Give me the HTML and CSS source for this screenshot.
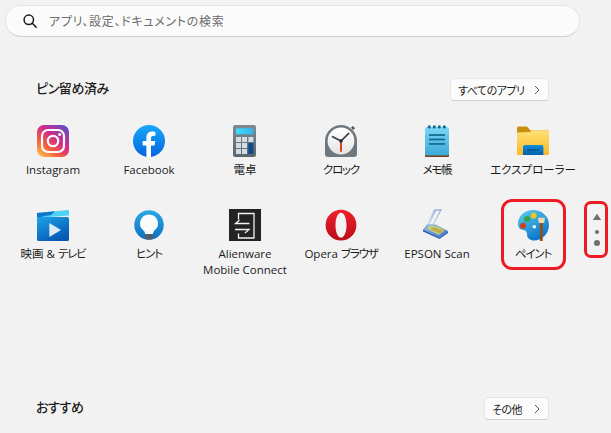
FILE: index.html
```html
<!DOCTYPE html>
<html lang="ja">
<head>
    <meta charset="UTF-8">
    <meta name="viewport" content="width=device-width, initial-scale=1.0">
    <title>スタート</title>
    <link rel="stylesheet" href="styles.css">
</head>
<body>
    <div class="search">
        <svg class="search-icon" viewBox="0 0 16 16" width="16" height="16">
            <circle cx="6.8" cy="6.8" r="4.7" fill="none" stroke="#1c1c1c" stroke-width="1.5"/>
            <path d="M10.3 10.3L14.2 14.2" stroke="#1c1c1c" stroke-width="1.6" stroke-linecap="round"/>
        </svg>
        <span>アプリ、設定、ドキュメントの検索</span>
    </div>

    <div class="section-head pinned-head">
        <h2>ピン留め済み</h2>
        <button class="more-button all-apps">すべてのアプリ<svg viewBox="0 0 8 10" width="8" height="10"><path d="M2 1l4 4-4 4" fill="none" stroke="#555" stroke-width="1"/></svg></button>
    </div>

    <div class="app-grid">
        <div class="app">
            <svg viewBox="0 0 32 32" width="32" height="32">
                <defs>
                    <linearGradient id="ig" x1="0.1" y1="1" x2="0.9" y2="0">
                        <stop offset="0" stop-color="#fdc04e"/>
                        <stop offset="0.3" stop-color="#f4603a"/>
                        <stop offset="0.6" stop-color="#d02a8e"/>
                        <stop offset="1" stop-color="#5b4fc9"/>
                    </linearGradient>
                </defs>
                <rect width="32" height="32" rx="7" fill="url(#ig)"/>
                <rect x="5" y="5" width="22" height="22" rx="6" fill="none" stroke="#fff" stroke-width="2.2"/>
                <circle cx="16" cy="16" r="5.2" fill="none" stroke="#fff" stroke-width="2.2"/>
                <circle cx="22.6" cy="9.4" r="1.5" fill="#fff"/>
            </svg>
            <span>Instagram</span>
        </div>
        <div class="app">
            <svg viewBox="0 0 32 32" width="32" height="32">
                <defs>
                    <linearGradient id="fb" x1="0" y1="0" x2="0" y2="1">
                        <stop offset="0" stop-color="#18a9f8"/>
                        <stop offset="1" stop-color="#0464e0"/>
                    </linearGradient>
                </defs>
                <circle cx="16" cy="16" r="16" fill="url(#fb)"/>
                <path d="M13.4 32V20.6H9.6V16h3.8v-3.4c0-3.9 2.3-6 5.8-6 1.7 0 3.2.3 3.2.3v3.8h-1.9c-1.9 0-2.5 1.2-2.5 2.4V16h4.2l-.7 4.6h-3.5V32z" fill="#fff"/>
            </svg>
            <span>Facebook</span>
        </div>
        <div class="app">
            <svg viewBox="0 0 32 32" width="32" height="32">
                <defs>
                    <linearGradient id="calc" x1="0" y1="0" x2="0" y2="1">
                        <stop offset="0" stop-color="#7f8a93"/>
                        <stop offset="1" stop-color="#5b666f"/>
                    </linearGradient>
                    <linearGradient id="calcscreen" x1="0" y1="0" x2="1" y2="0">
                        <stop offset="0" stop-color="#3fdcf8"/>
                        <stop offset="1" stop-color="#2fb4ee"/>
                    </linearGradient>
                </defs>
                <rect x="4" width="23" height="32" rx="2" fill="url(#calc)"/>
                <rect x="7" y="3.3" width="17.4" height="6" fill="url(#calcscreen)"/>
                <g fill="#d3dde3">
                    <rect x="7" y="12" width="5" height="5"/>
                    <rect x="13" y="12" width="5" height="5"/>
                    <rect x="19.4" y="12" width="5" height="5"/>
                    <rect x="7" y="18" width="5" height="5"/>
                    <rect x="13" y="18" width="5" height="5"/>
                    <rect x="7" y="24" width="5" height="5"/>
                    <rect x="13" y="24" width="5" height="5"/>
                </g>
                <rect x="19.4" y="18" width="5" height="11" fill="#0f4a8c"/>
            </svg>
            <span>電卓</span>
        </div>
        <div class="app">
            <svg viewBox="0 0 32 32" width="32" height="32">
                <defs>
                    <linearGradient id="clockface" x1="0" y1="0" x2="0" y2="1">
                        <stop offset="0" stop-color="#ffffff"/>
                        <stop offset="1" stop-color="#e4e4e4"/>
                    </linearGradient>
                </defs>
                <path d="M26 2.6l2-1.6 2 2.2-1.8 1.8z" fill="#4d555b"/>
                <path d="M0 16a16 16 0 0 1 32 0v13a3 3 0 0 1-3 3H3a3 3 0 0 1-3-3z" fill="#6e777e"/>
                <circle cx="16" cy="16" r="13.4" fill="url(#clockface)"/>
                <path d="M16 16L7.6 11.7" stroke="#3a3f44" stroke-width="1.7" stroke-linecap="round"/>
                <path d="M16 16L23.7 8.3" stroke="#3a3f44" stroke-width="1.7" stroke-linecap="round"/>
                <path d="M16 16V26.8" stroke="#d83b12" stroke-width="1.9"/>
                <circle cx="16" cy="16" r="1.7" fill="#22262a"/>
            </svg>
            <span class="kana">クロック</span>
        </div>
        <div class="app">
            <svg viewBox="0 0 32 32" width="32" height="32">
                <defs>
                    <linearGradient id="note" x1="0" y1="0" x2="0" y2="1">
                        <stop offset="0" stop-color="#7dd6f4"/>
                        <stop offset="1" stop-color="#3ba9d8"/>
                    </linearGradient>
                </defs>
                <rect x="4" y="29" width="24" height="3" rx="1" fill="#7a3f14"/>
                <rect x="4" y="2" width="24" height="28.5" rx="2" fill="url(#note)"/>
                <g fill="#0f6a8f">
                    <circle cx="8.3" cy="1.9" r="1.6"/>
                    <circle cx="13.3" cy="1.9" r="1.6"/>
                    <circle cx="18.3" cy="1.9" r="1.6"/>
                    <circle cx="23.3" cy="1.9" r="1.6"/>
                    <rect x="8" y="9.2" width="16" height="1.7"/>
                    <rect x="8" y="13.6" width="16" height="1.7"/>
                    <rect x="8" y="18.1" width="16" height="1.7"/>
                </g>
            </svg>
            <span class="kana">メモ帳</span>
        </div>
        <div class="app">
            <svg viewBox="0 0 32 32" width="32" height="32">
                <defs>
                    <linearGradient id="folder" x1="0" y1="0" x2="0" y2="1">
                        <stop offset="0" stop-color="#ffe176"/>
                        <stop offset="1" stop-color="#fbb926"/>
                    </linearGradient>
                    <linearGradient id="folderdoc" x1="0" y1="0" x2="0" y2="1">
                        <stop offset="0" stop-color="#0a8fdc"/>
                        <stop offset="1" stop-color="#0560ab"/>
                    </linearGradient>
                </defs>
                <path d="M0 3a1.5 1.5 0 0 1 1.5-1.5H10L13.5 5.5H32V9H0z" fill="#c98f10"/>
                <path d="M0 7.5L13 7 15 5.5H32V28.5a1.5 1.5 0 0 1-1.5 1.5H1.5A1.5 1.5 0 0 1 0 28.5z" fill="url(#folder)"/>
                <path d="M6 22a2 2 0 0 1 2-2h16.400a2 2 0 0 1 2 2v8H6z" fill="url(#folderdoc)"/>
                <rect x="10.500" y="24.500" width="11.500" height="1" fill="#063f72"/>
            </svg>
            <span>エクスプローラー</span>
        </div>
        <div class="app">
            <svg viewBox="0 0 32 32" width="32" height="32">
                <defs>
                    <linearGradient id="movie" x1="0" y1="0" x2="0.6" y2="1">
                        <stop offset="0" stop-color="#20a4e8"/>
                        <stop offset="1" stop-color="#0558b4"/>
                    </linearGradient>
                </defs>
                <path d="M0 4L31 1a1 1 0 0 1 1 1v4.500L0 9z" fill="#4fd2f6"/>
                <path d="M0 4L18 2.200 14 6 8 7 4 8 3 13H0z" fill="#0e78c8"/>
                <path d="M0 8h30.500a1.500 1.500 0 0 1 1.500 1.500V30.500a1.500 1.500 0 0 1-1.500 1.500H1.500A1.500 1.500 0 0 1 0 30.500z" fill="url(#movie)"/>
                <path d="M12.300 14L24 21 12.300 28z" fill="#dcecf6"/>
            </svg>
            <span>映画 &amp; <span class="kana">テレビ</span></span>
        </div>
        <div class="app">
            <svg viewBox="0 0 32 32" width="32" height="32">
                <defs>
                    <linearGradient id="tips" x1="0" y1="0" x2="0" y2="1">
                        <stop offset="0" stop-color="#2aa8e4"/>
                        <stop offset="1" stop-color="#0d70c0"/>
                    </linearGradient>
                </defs>
                <circle cx="16" cy="16" r="14.700" fill="url(#tips)"/>
                <path d="M16 5.500a9 9 0 0 0-5.500 16.100c1 .9 1.500 1.900 1.500 3.400h8c0-1.500.5-2.500 1.500-3.400A9 9 0 0 0 16 5.500z" fill="#fbfbfb"/>
                <path d="M12 25.500h8v2.500a2.500 2.500 0 0 1-2.500 2.500h-3a2.500 2.500 0 0 1-2.500-2.500z" fill="#565d66"/>
            </svg>
            <span class="kana">ヒント</span>
        </div>
        <div class="app">
            <svg viewBox="0 0 32 32" width="32" height="32">
                <rect width="32" height="32" fill="#232323"/>
                <path d="M9.500 10.500V4.500H25V29H9.500V24.500" fill="none" stroke="#f2f2f2" stroke-width="1.300"/>
                <path d="M20.500 14.500H6.500L10.500 11" fill="none" stroke="#f2f2f2" stroke-width="1.300"/>
                <path d="M6 20.500H20L16 24" fill="none" stroke="#f2f2f2" stroke-width="1.300"/>
            </svg>
            <span>Alienware<br>Mobile Connect</span>
        </div>
        <div class="app">
            <svg viewBox="0 0 32 32" width="32" height="32">
                <defs>
                    <linearGradient id="opera" x1="0" y1="0" x2="0" y2="1">
                        <stop offset="0" stop-color="#f0202e"/>
                        <stop offset="1" stop-color="#b80d18"/>
                    </linearGradient>
                </defs>
                <path fill-rule="evenodd" d="M16 .800a15.400 15.400 0 1 0 0 30.800 15.400 15.400 0 0 0 0-30.800zM16 3.800c3.200 0 5.500 5.400 5.500 12.400S19.200 28.600 16 28.600s-5.500-5.400-5.500-12.400S12.800 3.800 16 3.800z" fill="url(#opera)"/>
            </svg>
            <span>Opera <span class="kana">ブラウザ</span></span>
        </div>
        <div class="app">
            <svg viewBox="0 0 32 32" width="32" height="32">
                <defs>
                    <linearGradient id="scan" x1="0" y1="0" x2="1" y2="1">
                        <stop offset="0" stop-color="#8fb6e8"/>
                        <stop offset="1" stop-color="#3c6fc4"/>
                    </linearGradient>
                    <linearGradient id="scanlid" x1="1" y1="0" x2="0" y2="1">
                        <stop offset="0" stop-color="#8fa8d8"/>
                        <stop offset="1" stop-color="#dfe7f4"/>
                    </linearGradient>
                </defs>
                <path d="M13 .500L21 0l-8 15.500-8 2.500z" fill="url(#scanlid)"/>
                <path d="M15 2L19 1.500 12 14.500 8.500 15.500z" fill="#eef2f9"/>
                <path d="M6 15.500L2 20.500l16.500 8 8.500-6.500-12.500-6.500z" fill="url(#scan)"/>
                <path d="M8 16.500L5.500 20l12.500 6 6-5-9.500-4.500z" fill="#b9cf8a"/>
                <path d="M13 18l9.500 3.500-4 3-9.500-4.500z" fill="#c6a94a"/>
                <path d="M2 20.500v2l16.500 7.500 8.500-6v-2l-8.500 6.500z" fill="#2d5eb4"/>
            </svg>
            <span>EPSON Scan</span>
        </div>
        <div class="app">
            <svg viewBox="0 0 32 32" width="32" height="32">
                <defs>
                    <linearGradient id="palette" x1="0" y1="0" x2="0.600" y2="1">
                        <stop offset="0" stop-color="#5cd0f2"/>
                        <stop offset="1" stop-color="#0a74cc"/>
                    </linearGradient>
                </defs>
                <path d="M16 1C7 1 1 7.500 1 14.500 1 20 4 20.500 6.500 21c2.500.5 3.500 2 3.500 4.500 0 3.500 3 6 7 6 8 0 15-7 15-15.500C32 7 24.500 1 16 1z" fill="url(#palette)"/>
                <circle cx="10" cy="10" r="3" fill="#3aa245"/>
                <circle cx="16.700" cy="6.700" r="2.900" fill="#f5c518"/>
                <circle cx="6" cy="16.700" r="3" fill="#c8431f"/>
                <circle cx="17.300" cy="17.700" r="1.800" fill="#ffffff"/>
                <path d="M22.700 13h3.300l-.3 19h-2.800z" fill="#8a5320"/>
                <path d="M21 8.700h7l-.8 5.300h-5.400z" fill="#f0d9a8"/>
            </svg>
            <span class="kana">ペイント</span>
        </div>
    </div>

    <div class="section-head recommended-head">
        <h2>おすすめ</h2>
        <button class="more-button other">その他<svg viewBox="0 0 8 10" width="8" height="10"><path d="M2 1l4 4-4 4" fill="none" stroke="#555" stroke-width="1"/></svg></button>
    </div>

    <div class="pager">
        <svg viewBox="0 0 10 8" width="10" height="8"><path d="M5 .8L9.200 7H.8z" fill="#6f6f6f"/></svg>
        <span class="pager-dot small"></span>
        <span class="pager-dot"></span>
    </div>
    <div class="mark mark-app"></div>
    <div class="mark mark-pager"></div>
</body>
</html>
```

FILE: styles.css
```css
body {
    margin: 0;
    height: 433px;
    overflow: hidden;
    position: relative;
    background-color: #f2f2f2;
    color: #1b1b1b;
    font-family: "Open Sans", "Noto Sans CJK JP", sans-serif;
    font-size: 11.5px;
    font-feature-settings: "palt";
}
.search {
    display: flex;
    align-items: center;
    gap: 11px;
    box-sizing: border-box;
    width: 575px;
    height: 32px;
    margin: 5px 0 0 5px;
    padding-left: 16px;
    background-color: #fbfbfb;
    border: 1px solid #e4e4e4;
    border-bottom-color: #cfcfcf;
    border-radius: 16px;
    color: #6b6b6b;
    font-size: 12px;
    letter-spacing: .7px;
}
.section-head {
    display: flex;
    justify-content: space-between;
    align-items: center;
    height: 23px;
    margin: 0 62px 0 36px;
}
.pinned-head {
    margin-top: 41px;
}
.recommended-head {
    margin-top: 104px;
}
h2 {
    margin: 0;
    padding-bottom: 4px;
    font-size: 13px;
    font-weight: 500;
    font-family: "Noto Sans CJK JP", sans-serif;
    letter-spacing: -.4px;
}
.more-button {
    display: flex;
    align-items: center;
    justify-content: space-between;
    box-sizing: border-box;
    height: 23px;
    padding: 0 7px;
    background-color: #fbfbfb;
    border: 1px solid #e6e6e6;
    border-bottom-color: #d0d0d0;
    border-radius: 4px;
    color: #1b1b1b;
    font-family: inherit;
    font-size: 11px;
    font-feature-settings: inherit;
    letter-spacing: -.5px;
}
.all-apps {
    width: 99px;
}
.other {
    width: 65px;
}
.app-grid {
    display: grid;
    grid-template-columns: repeat(6, 96px);
    grid-auto-rows: 84px;
    margin: 24px 0 0 5px;
}
.app {
    display: flex;
    flex-direction: column;
    align-items: center;
    gap: 5px;
    text-align: center;
    line-height: 16px;
    white-space: nowrap;
}
.app svg {
    flex-shrink: 0;
}
.kana {
    letter-spacing: -1.2px;
}
.pager {
    position: absolute;
    left: 592px;
    top: 213px;
    width: 10px;
    display: flex;
    flex-direction: column;
    align-items: center;
}
.pager-dot {
    width: 6px;
    height: 6px;
    margin-top: 6px;
    border-radius: 50%;
    background-color: #6f6f6f;
}
.pager-dot.small {
    width: 4px;
    height: 4px;
    margin-top: 9px;
}
.mark {
    position: absolute;
    box-sizing: border-box;
    border: 3px solid #ed1c24;
    border-radius: 11px;
}
.mark-app {
    left: 501px;
    top: 199px;
    width: 65px;
    height: 71px;
}
.mark-pager {
    left: 584px;
    top: 201px;
    width: 24px;
    height: 57px;
    border-radius: 7px;
}
```
